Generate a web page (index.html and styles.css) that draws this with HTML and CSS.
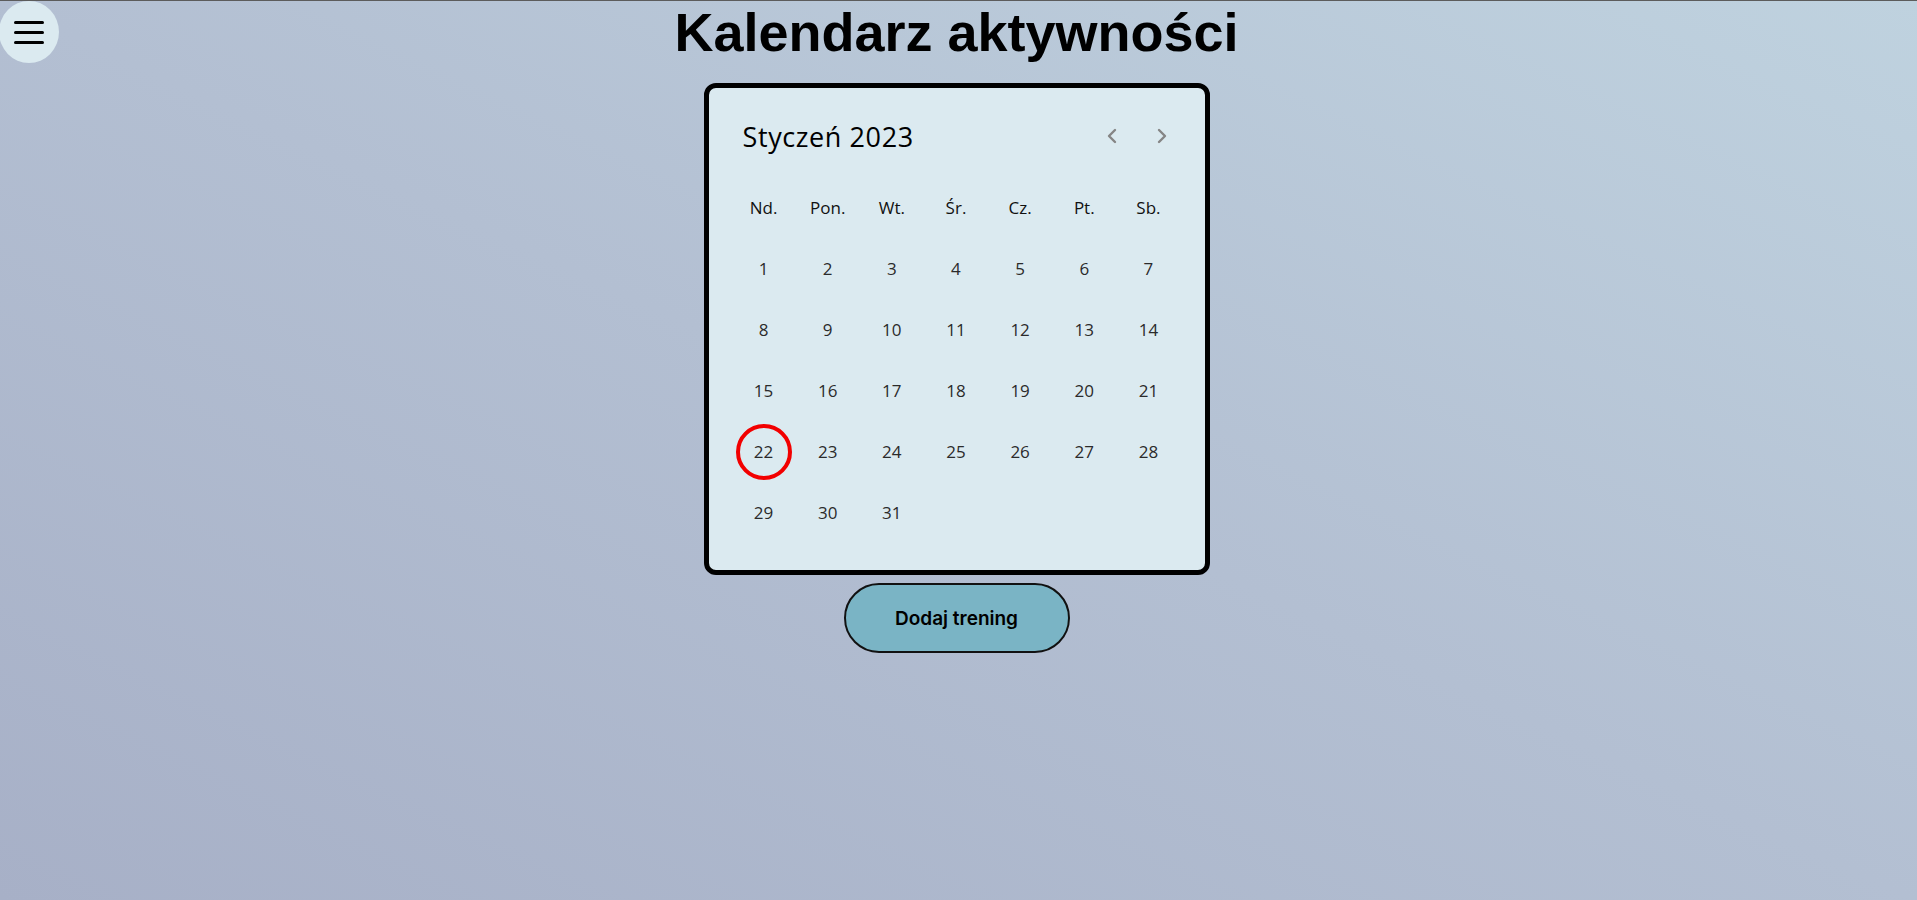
FILE: index.html
```html
<!DOCTYPE html>
<html lang="pl">
<head>
<meta charset="utf-8">
<title>Kalendarz aktywności</title>
<link rel="stylesheet" href="styles.css">
</head>
<body>
<button class="menu-btn" aria-label="Menu">
  <span class="bar"></span><span class="bar"></span><span class="bar"></span>
</button>
<main class="page">
  <h1 class="title">Kalendarz aktywności</h1>
  <section class="calendar">
    <header class="cal-head">
      <span class="cal-month">Styczeń 2023</span>
      <div class="cal-nav">
        <button class="nav-btn" aria-label="Poprzedni">
          <svg width="12" height="16" viewBox="0 0 12 16"><polyline points="9,2 3,8 9,14" fill="none" stroke="#858585" stroke-width="2.4" stroke-linecap="round" stroke-linejoin="round"/></svg>
        </button>
        <button class="nav-btn" aria-label="Następny">
          <svg width="12" height="16" viewBox="0 0 12 16"><polyline points="3,2 9,8 3,14" fill="none" stroke="#858585" stroke-width="2.4" stroke-linecap="round" stroke-linejoin="round"/></svg>
        </button>
      </div>
    </header>
    <div class="cal-grid">
      <div class="dow">Nd.</div><div class="dow">Pon.</div><div class="dow">Wt.</div><div class="dow">Śr.</div><div class="dow">Cz.</div><div class="dow">Pt.</div><div class="dow">Sb.</div>
      <div class="day"><span>1</span></div><div class="day"><span>2</span></div><div class="day"><span>3</span></div><div class="day"><span>4</span></div><div class="day"><span>5</span></div><div class="day"><span>6</span></div><div class="day"><span>7</span></div>
      <div class="day"><span>8</span></div><div class="day"><span>9</span></div><div class="day"><span>10</span></div><div class="day"><span>11</span></div><div class="day"><span>12</span></div><div class="day"><span>13</span></div><div class="day"><span>14</span></div>
      <div class="day"><span>15</span></div><div class="day"><span>16</span></div><div class="day"><span>17</span></div><div class="day"><span>18</span></div><div class="day"><span>19</span></div><div class="day"><span>20</span></div><div class="day"><span>21</span></div>
      <div class="day"><span class="today">22</span></div><div class="day"><span>23</span></div><div class="day"><span>24</span></div><div class="day"><span>25</span></div><div class="day"><span>26</span></div><div class="day"><span>27</span></div><div class="day"><span>28</span></div>
      <div class="day"><span>29</span></div><div class="day"><span>30</span></div><div class="day"><span>31</span></div>
    </div>
  </section>
  <button class="add-btn">Dodaj trening</button>
</main>
</body>
</html>
```

FILE: styles.css
```css
html, body {
  margin: 0;
  padding: 0;
}

body {
  min-height: 100vh;
  box-sizing: border-box;
  border-top: 1px solid #5c5c5c;
  background: linear-gradient(to top right, #a7b0c7 0%, #b3bfd2 50%, #bfd2df 100%);
  font-family: "Open Sans", "Noto Sans", sans-serif;
}

.menu-btn {
  position: absolute;
  top: 1px;
  left: -1px;
  width: 60px;
  height: 62px;
  border: none;
  border-radius: 50%;
  background: #dbeaf0;
  display: flex;
  flex-direction: column;
  align-items: center;
  justify-content: center;
  gap: 7px;
  padding: 0;
  cursor: pointer;
}

.menu-btn .bar {
  display: block;
  width: 30px;
  height: 3px;
  border-radius: 2px;
  background: #000;
}

.page {
  display: flex;
  flex-direction: column;
  align-items: center;
  padding-right: 4px;
}

.title {
  margin: 0;
  font-family: "Liberation Sans", Arial, sans-serif;
  font-weight: 700;
  font-size: 54px;
  color: #000;
}

.calendar {
  margin-top: 20px;
  width: 506px;
  box-sizing: border-box;
  border: 5px solid #000;
  border-radius: 12px;
  background: #dbeaf0;
}

.cal-head {
  height: 89px;
  box-sizing: border-box;
  display: flex;
  align-items: center;
  justify-content: space-between;
  padding: 7px 23px 0 34px;
}

.cal-month {
  font-size: 27px;
  letter-spacing: 0.6px;
  color: #000;
}

.cal-nav {
  display: flex;
  gap: 10px;
}

.nav-btn {
  width: 40px;
  height: 40px;
  border: none;
  background: transparent;
  padding: 0;
  display: flex;
  align-items: center;
  justify-content: center;
  cursor: pointer;
}

.cal-grid {
  display: grid;
  grid-template-columns: repeat(7, 1fr);
  grid-auto-rows: 61px;
  padding: 0 24px 27px 23px;
}

.dow {
  display: flex;
  align-items: center;
  justify-content: center;
  font-size: 17px;
  font-weight: 500;
  color: #111;
}

.day {
  display: flex;
  align-items: center;
  justify-content: center;
  font-size: 17px;
  color: #2b2b2b;
}

.day span {
  display: flex;
  align-items: center;
  justify-content: center;
  width: 56px;
  height: 56px;
  box-sizing: border-box;
  border-radius: 50%;
}

.day .today {
  border: 4px solid #f20000;
}

.add-btn {
  margin-top: 8px;
  width: 226px;
  height: 70px;
  border: 2px solid #111;
  border-radius: 35px;
  background: #7ab4c5;
  font-family: "Inter", "Liberation Sans", sans-serif;
  font-weight: 600;
  font-size: 19px;
  color: #000;
  cursor: pointer;
}
```
